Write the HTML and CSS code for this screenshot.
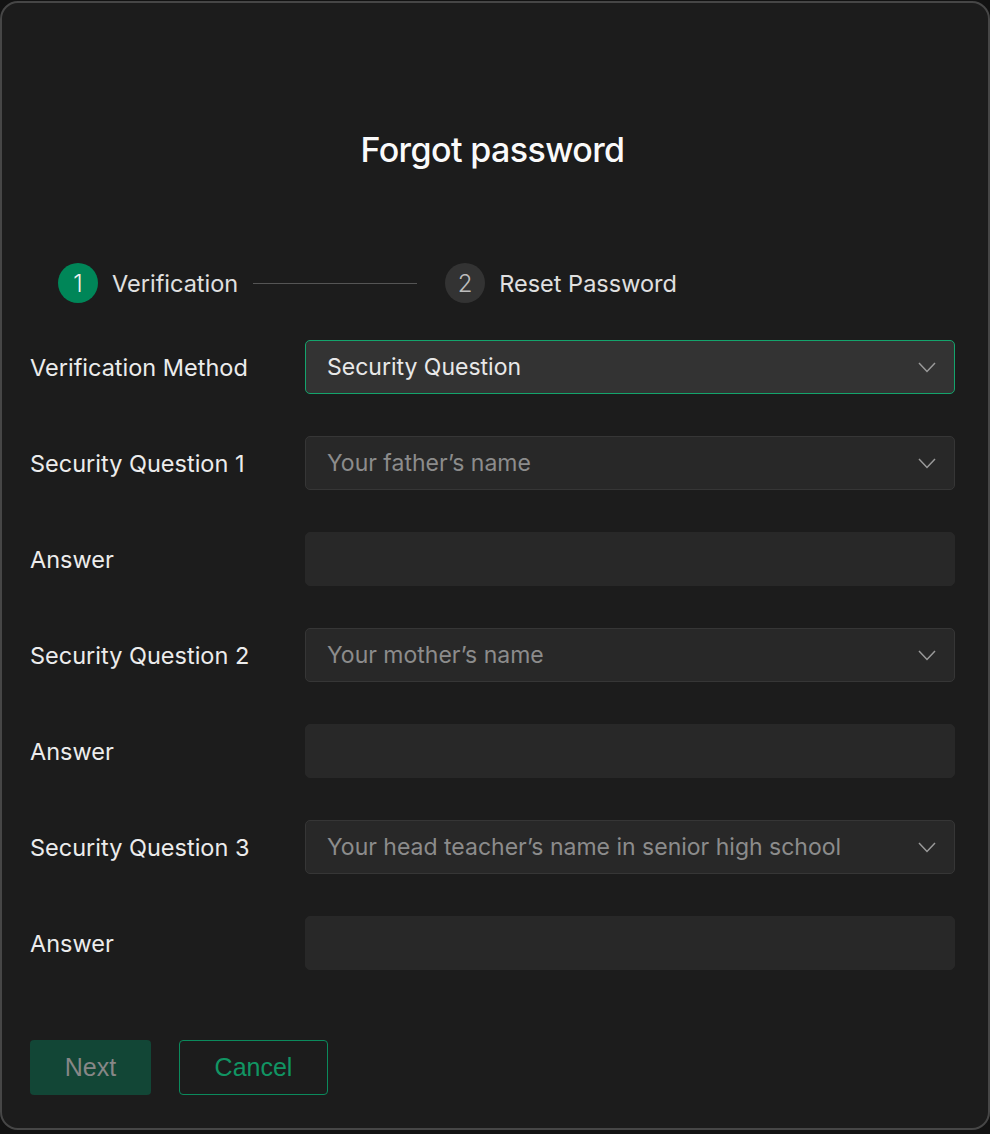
FILE: index.html
```html
<!DOCTYPE html>
<html lang="en">
<head>
<meta charset="utf-8">
<title>Forgot password</title>
<link rel="stylesheet" href="styles.css">
</head>
<body>
<div class="panel">
  <h1 class="title">Forgot password</h1>
  <div class="steps">
    <div class="step active"><span class="num">1</span><span class="step-label">Verification</span></div>
    <div class="connector"></div>
    <div class="step"><span class="num">2</span><span class="step-label">Reset Password</span></div>
  </div>
  <form class="form">
    <label class="label">Verification Method</label>
    <div class="field select focused"><span class="value">Security Question</span><svg class="chev" viewBox="0 0 18 11" width="18" height="11"><path d="M1 1l8 8.5L17 1" fill="none" stroke="#9a9a9a" stroke-width="1.5"/></svg></div>

    <label class="label">Security Question 1</label>
    <div class="field select"><span class="placeholder">Your father’s name</span><svg class="chev" viewBox="0 0 18 11" width="18" height="11"><path d="M1 1l8 8.5L17 1" fill="none" stroke="#9a9a9a" stroke-width="1.5"/></svg></div>

    <label class="label">Answer</label>
    <div class="field input"></div>

    <label class="label">Security Question 2</label>
    <div class="field select"><span class="placeholder">Your mother’s name</span><svg class="chev" viewBox="0 0 18 11" width="18" height="11"><path d="M1 1l8 8.5L17 1" fill="none" stroke="#9a9a9a" stroke-width="1.5"/></svg></div>

    <label class="label">Answer</label>
    <div class="field input"></div>

    <label class="label">Security Question 3</label>
    <div class="field select"><span class="placeholder">Your head teacher’s name in senior high school</span><svg class="chev" viewBox="0 0 18 11" width="18" height="11"><path d="M1 1l8 8.5L17 1" fill="none" stroke="#9a9a9a" stroke-width="1.5"/></svg></div>

    <label class="label">Answer</label>
    <div class="field input"></div>
  </form>
  <div class="actions">
    <button class="btn primary" type="button">Next</button>
    <button class="btn outline" type="button">Cancel</button>
  </div>
</div>
</body>
</html>
```
FILE: styles.css
```css
html, body {
  margin: 0;
  padding: 0;
  background: #121212;
}
body {
  font-family: Inter, "Noto Sans", sans-serif;
  color: #e6e6e6;
}
.panel {
  box-sizing: border-box;
  width: 990px;
  height: 1129px;
  margin-top: 1px;
  background: #1c1c1c;
  border: 2px solid #464646;
  border-radius: 18px;
  padding: 0 33px 0 28px;
}
.title {
  margin: 127px 0 0;
  text-align: center;
  font-size: 34px;
  line-height: 40px;
  font-weight: 500;
  color: #fafafa;
  letter-spacing: -0.6px;
}
.steps {
  display: flex;
  align-items: center;
  margin: 93px 0 0 28px;
  height: 40px;
}
.step {
  display: flex;
  align-items: center;
  gap: 14px;
}
.num {
  width: 40px;
  height: 40px;
  border-radius: 50%;
  background: #333333;
  color: #bdbdbd;
  display: flex;
  align-items: center;
  justify-content: center;
  font-size: 24px;
  font-weight: 300;
}
.step.active .num {
  background: #008658;
  color: #f0f0f0;
}
.step-label {
  font-size: 23.5px;
  color: #e0e0e0;
  letter-spacing: 0;
}
.connector {
  width: 164px;
  height: 1px;
  background: #555555;
  margin: 0 28px 0 15px;
}
.form {
  display: grid;
  grid-template-columns: 275px 650px;
  grid-auto-rows: 54px;
  row-gap: 42px;
  align-items: center;
  margin-top: 37px;
}
.label {
  font-size: 23.5px;
  color: #ececec;
  letter-spacing: 0;
}
.field {
  box-sizing: border-box;
  height: 54px;
  border-radius: 5px;
  background: #282828;
  border: 1px solid #363636;
  display: flex;
  align-items: center;
  padding: 0 18px 0 21px;
}
.field.input {
  border-color: #282828;
}
.field.focused {
  background: #333333;
  border-color: #14a46c;
}
.value, .placeholder {
  flex: 1;
  font-size: 23px;
  letter-spacing: 0;
}
.value { color: #e8e8e8; }
.placeholder { color: #8c8c8c; }
.chev { flex: none; }
.actions {
  display: flex;
  gap: 28px;
  margin-top: 70px;
}
.btn {
  box-sizing: border-box;
  height: 55px;
  border-radius: 4px;
  font-family: "Liberation Sans", Arial, sans-serif;
  font-size: 25px;
  padding: 0;
}
.btn.primary {
  width: 121px;
  background: #124636;
  border: none;
  color: #878787;
}
.btn.outline {
  width: 149px;
  background: transparent;
  border: 1px solid #0b8a5c;
  color: #119563;
}
```
